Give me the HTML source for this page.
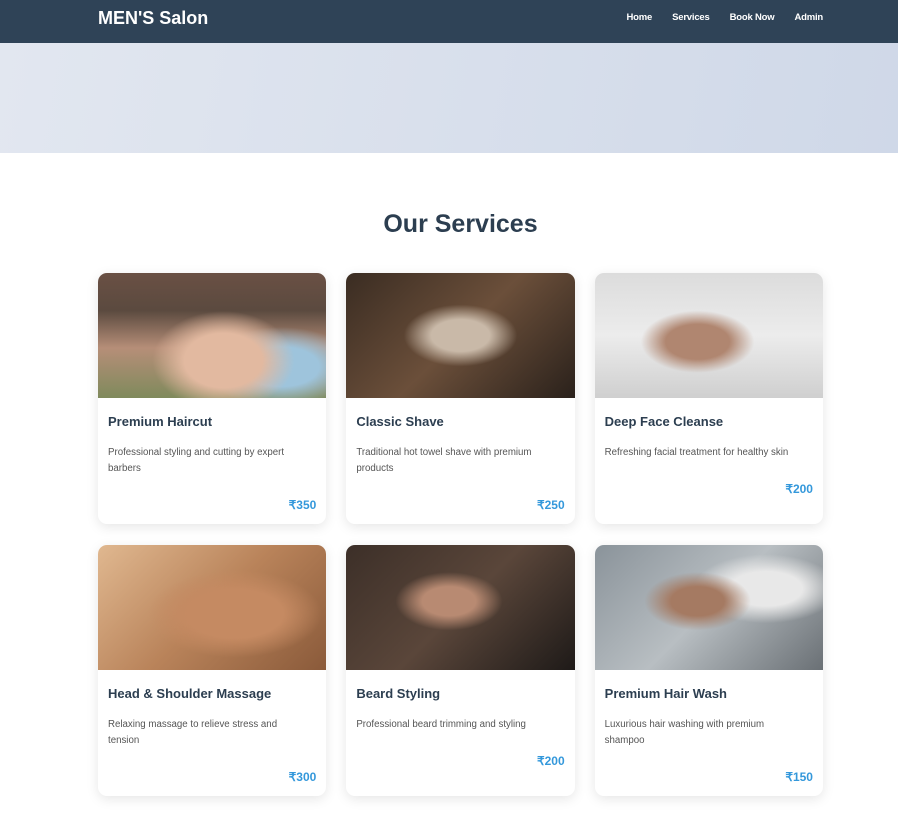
<!DOCTYPE html>
<html><head><meta charset="utf-8"><style>
*{margin:0;padding:0;box-sizing:border-box}
body{width:898px;height:819px;overflow:hidden;background:#fff;font-family:"Liberation Sans",sans-serif;color:#2c3e50}
.hdr{height:43px;background:#2f4357;position:relative}
.logo{position:absolute;left:98px;top:8px;color:#fff;font-size:18px;font-weight:bold}
.nav{position:absolute;right:75px;top:12px;display:flex;gap:20px;color:#fff;font-size:9.5px;font-weight:bold;letter-spacing:-0.2px}
.hero{height:110px;background:linear-gradient(100deg,#e2e7f0,#cfd8e8)}
h2{text-align:center;font-size:25px;margin-top:57px;height:64px;color:#2c3e50;padding-left:23px}
.grid{position:absolute;left:98px;top:273px;width:725px;display:grid;grid-template-columns:repeat(3,228.33px);column-gap:20px;row-gap:21px}
.card{background:#fff;border-radius:9px;box-shadow:0 3px 12px rgba(0,0,0,.1);overflow:hidden;height:251px}
.img{height:125px}
.b{padding:16px 10px 0 10px}
.t{font-size:13px;font-weight:bold;color:#2c3e50;height:17px}
.d{font-size:9.7px;line-height:16px;color:#555;margin-top:14px;width:195px}
.p{text-align:right;font-size:12px;font-weight:bold;color:#3498db;margin-top:21px}
</style></head><body>
<div class="hdr"><div class="logo">MEN'S Salon</div><div class="nav"><span>Home</span><span>Services</span><span>Book Now</span><span>Admin</span></div></div>
<div class="hero"></div>
<h2>Our Services</h2>
<div class="grid">
<div class="card"><div class="img" style="background:radial-gradient(ellipse at 55% 70%,#e2b9a0 0 22%,transparent 40%),radial-gradient(ellipse at 80% 75%,#9ec4dc 0 15%,transparent 30%),linear-gradient(180deg,#6a5044 0,#5b4a3f 30%,#b68e78 60%,#7f8a5c 100%)"></div><div class="b"><div class="t">Premium Haircut</div><div class="d">Professional styling and cutting by expert barbers</div><div class="p">₹350</div></div></div>
<div class="card"><div class="img" style="background:radial-gradient(ellipse at 50% 50%,#c9b9a8 0 18%,transparent 35%),linear-gradient(135deg,#3a2c22,#6b4f3a 50%,#2a211b)"></div><div class="b"><div class="t">Classic Shave</div><div class="d">Traditional hot towel shave with premium products</div><div class="p">₹250</div></div></div>
<div class="card"><div class="img" style="background:radial-gradient(ellipse at 45% 55%,#b08670 0 18%,transparent 32%),linear-gradient(180deg,#dcdcdc,#ececec 50%,#cfcfcf)"></div><div class="b"><div class="t">Deep Face Cleanse</div><div class="d">Refreshing facial treatment for healthy skin</div><div class="p">₹200</div></div></div>
<div class="card"><div class="img" style="background:radial-gradient(ellipse at 60% 55%,#c58a62 0 25%,transparent 45%),linear-gradient(135deg,#e0b890,#b9835a 50%,#8a5a3a)"></div><div class="b"><div class="t">Head &amp; Shoulder Massage</div><div class="d">Relaxing massage to relieve stress and tension</div><div class="p">₹300</div></div></div>
<div class="card"><div class="img" style="background:radial-gradient(ellipse at 45% 45%,#b88a72 0 15%,transparent 30%),linear-gradient(135deg,#3c2f28,#5a463a 50%,#1e1a18)"></div><div class="b"><div class="t">Beard Styling</div><div class="d">Professional beard trimming and styling</div><div class="p">₹200</div></div></div>
<div class="card"><div class="img" style="background:radial-gradient(ellipse at 45% 45%,#a57a62 0 15%,transparent 30%),radial-gradient(ellipse at 75% 35%,#e8e8e8 0 15%,transparent 30%),linear-gradient(135deg,#8a939a,#b8bec2 50%,#6a7075)"></div><div class="b"><div class="t">Premium Hair Wash</div><div class="d">Luxurious hair washing with premium shampoo</div><div class="p">₹150</div></div></div>
</div>
</body></html>
